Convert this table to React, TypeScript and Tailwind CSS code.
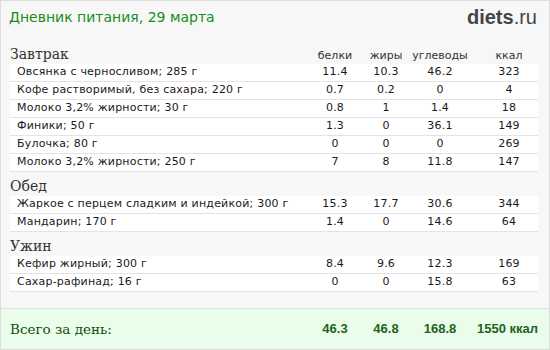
const breakfast = [
  ['Овсянка с черносливом; 285 г', '11.4', '10.3', '46.2', '323'],
  ['Кофе растворимый, без сахара; 220 г', '0.7', '0.2', '0', '4'],
  ['Молоко 3,2% жирности; 30 г', '0.8', '1', '1.4', '18'],
  ['Финики; 50 г', '1.3', '0', '36.1', '149'],
  ['Булочка; 80 г', '0', '0', '0', '269'],
  ['Молоко 3,2% жирности; 250 г', '7', '8', '11.8', '147'],
];

const lunch = [
  ['Жаркое с перцем сладким и индейкой; 300 г', '15.3', '17.7', '30.6', '344'],
  ['Мандарин; 170 г', '1.4', '0', '14.6', '64'],
];

const dinner = [
  ['Кефир жирный; 300 г', '8.4', '9.6', '12.3', '169'],
  ['Сахар-рафинад; 16 г', '0', '0', '15.8', '63'],
];

const cols = 'grid grid-cols-[1fr_50px_52px_56px_70px]';

const Row = ({item}: {item: string[]}) => (
  <div className={`${cols} h-[18px] items-center border-b border-[#e4e4e4] bg-white text-[11px] tracking-[0.2px] text-[#1a1a1a]`}>
    <span className="truncate pl-[7px]">{item[0]}</span>
    <span className="text-center">{item[1]}</span>
    <span className="text-center">{item[2]}</span>
    <span className="text-center">{item[3]}</span>
    <span className="pl-3 text-center">{item[4]}</span>
  </div>
);

const Meal = ({title, items, head = false}: {title: string; items: string[][]; head?: boolean}) => (
  <div>
    <div className={`${cols} h-[24px] items-end pb-[3px]`}>
      <span className="font-['DejaVu_Serif',serif] text-[14px] leading-none text-[#333]">{title}</span>
      {head && (
        <>
          <span className="text-center text-[11px] leading-none text-[#333]">белки</span>
          <span className="text-center text-[11px] leading-none text-[#333]">жиры</span>
          <span className="text-center text-[11px] leading-none text-[#333]">углеводы</span>
          <span className="pl-3 text-center text-[11px] leading-none text-[#333]">ккал</span>
        </>
      )}
    </div>
    {items.map((item, i) => (
      <Row key={i} item={item}/>
    ))}
  </div>
);

export default function App() {
  return (
    <div className="flex h-[350px] w-[550px] flex-col border border-[#dddddd] bg-[#f7f7f7] font-['DejaVu_Sans',sans-serif]">
      <div className="flex h-[39px] items-start justify-between pl-[8px] pr-[12px] pt-[6px]">
        <h1 className="text-[14px] text-[#1a8c1a]">Дневник питания, 29 марта</h1>
        <div className="font-['Liberation_Sans',sans-serif] text-[20px] leading-none text-[#454545]">
          <span className="font-bold">diets</span>.ru
        </div>
      </div>

      <div className="pl-[9px] pr-[11px]">
        <Meal title="Завтрак" items={breakfast} head/>
        <Meal title="Обед" items={lunch}/>
        <Meal title="Ужин" items={dinner}/>
      </div>

      <div className="flex-1"/>

      <div className={`${cols} h-[41px] items-center border-t border-[#dddddd] bg-[#eafdea] pl-[9px] pr-[11px]`}>
        <span className="font-['DejaVu_Serif',serif] text-[13.5px] text-[#0e4d0e]">Всего за день:</span>
        <span className="text-center font-['Liberation_Sans',sans-serif] text-[13px] font-bold text-[#1f631f]">46.3</span>
        <span className="text-center font-['Liberation_Sans',sans-serif] text-[13px] font-bold text-[#1f631f]">46.8</span>
        <span className="text-center font-['Liberation_Sans',sans-serif] text-[13px] font-bold text-[#1f631f]">168.8</span>
        <span className="text-right font-['Liberation_Sans',sans-serif] text-[13px] font-bold whitespace-nowrap text-[#1f631f]">1550 ккал</span>
      </div>
    </div>
  );
}
